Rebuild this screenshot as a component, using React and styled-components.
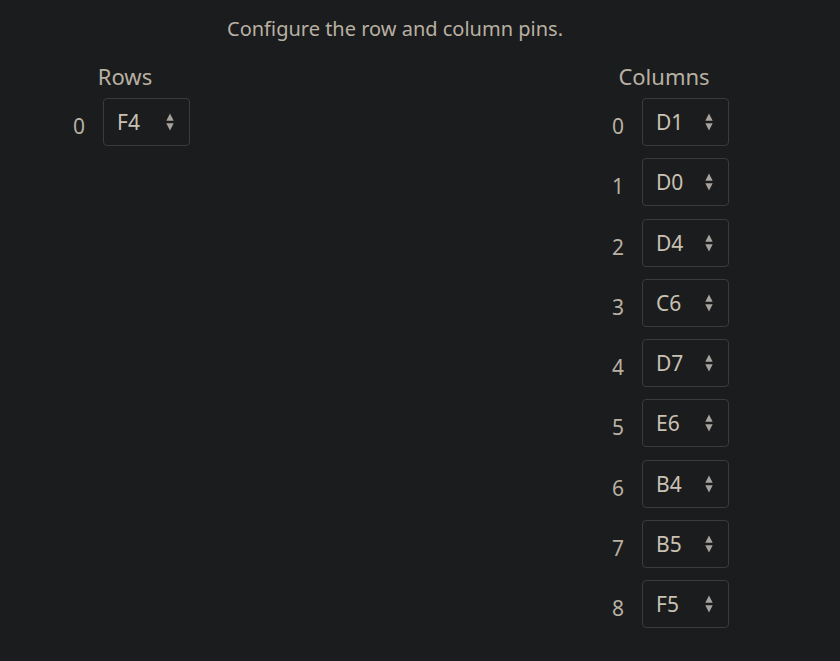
import React from "react";
import styled, { createGlobalStyle } from "styled-components";

const GlobalStyle = createGlobalStyle`
  html, body {
    margin: 0;
    padding: 0;
    background: #1b1c1e;
  }
  body {
    font-family: "Noto Sans", "Open Sans", sans-serif;
    color: #b8b0a2;
  }
`;

const Page = styled.div`
  width: 840px;
  height: 661px;
  box-sizing: border-box;
  padding: 15px 0 0 71px;
`;

const Container = styled.div`
  width: 658px;
`;

const Description = styled.p`
  margin: 0 10px 0 0;
  text-align: center;
  font-size: 20px;
  line-height: 28px;
  color: #b8b0a2;
`;

const Columns = styled.div`
  display: flex;
  justify-content: space-between;
  margin-top: 19px;
`;

const Section = styled.div`
  display: flex;
  flex-direction: column;
  align-items: stretch;
`;

const Heading = styled.h3`
  margin: 0 0 8px;
  padding-right: ${(p) => p.$shift || 0}px;
  text-align: center;
  font-size: 22px;
  font-weight: 400;
  line-height: 28px;
  color: #b8b0a2;
`;

const PinList = styled.div`
  display: flex;
  flex-direction: column;
  gap: 12.25px;
`;

const PinRow = styled.div`
  display: flex;
  align-items: center;
  gap: 18px;
`;

const Index = styled.span`
  width: 14px;
  padding-top: 8px;
  text-align: right;
  font-size: 21px;
  color: #b8b0a2;
`;

const Select = styled.div`
  box-sizing: border-box;
  width: 87px;
  height: 48px;
  display: flex;
  align-items: center;
  justify-content: space-between;
  padding: 0 14px 0 13px;
  border: 1px solid #3a3b3d;
  border-radius: 4px;
  background: #1b1c1e;
  font-size: 21px;
  color: #c9c1b3;
`;

const Arrows = styled.svg`
  display: block;
  width: 10px;
  height: 22px;
`;

const rows = ["F4"];
const columns = ["D1", "D0", "D4", "C6", "D7", "E6", "B4", "B5", "F5"];

function PinSelect({ value }) {
  return (
    <Select>
      <span>{value}</span>
      <Arrows viewBox="0 0 10 22">
        <path d="M5 2.5 L8.7 9.7 L1.3 9.7 Z" fill="#a7a39c" />
        <path d="M5 19.5 L8.7 12.3 L1.3 12.3 Z" fill="#a7a39c" />
      </Arrows>
    </Select>
  );
}

function PinGroup({ title, pins, shift }) {
  return (
    <Section>
      <Heading $shift={shift}>{title}</Heading>
      <PinList>
        {pins.map((pin, i) => (
          <PinRow key={i}>
            <Index>{i}</Index>
            <PinSelect value={pin} />
          </PinRow>
        ))}
      </PinList>
    </Section>
  );
}

export default function App() {
  return (
    <Page>
      <GlobalStyle />
      <Container>
        <Description>Configure the row and column pins.</Description>
        <Columns>
          <PinGroup title="Rows" pins={rows} shift={11} />
          <PinGroup title="Columns" pins={columns} shift={11} />
        </Columns>
      </Container>
    </Page>
  );
}
